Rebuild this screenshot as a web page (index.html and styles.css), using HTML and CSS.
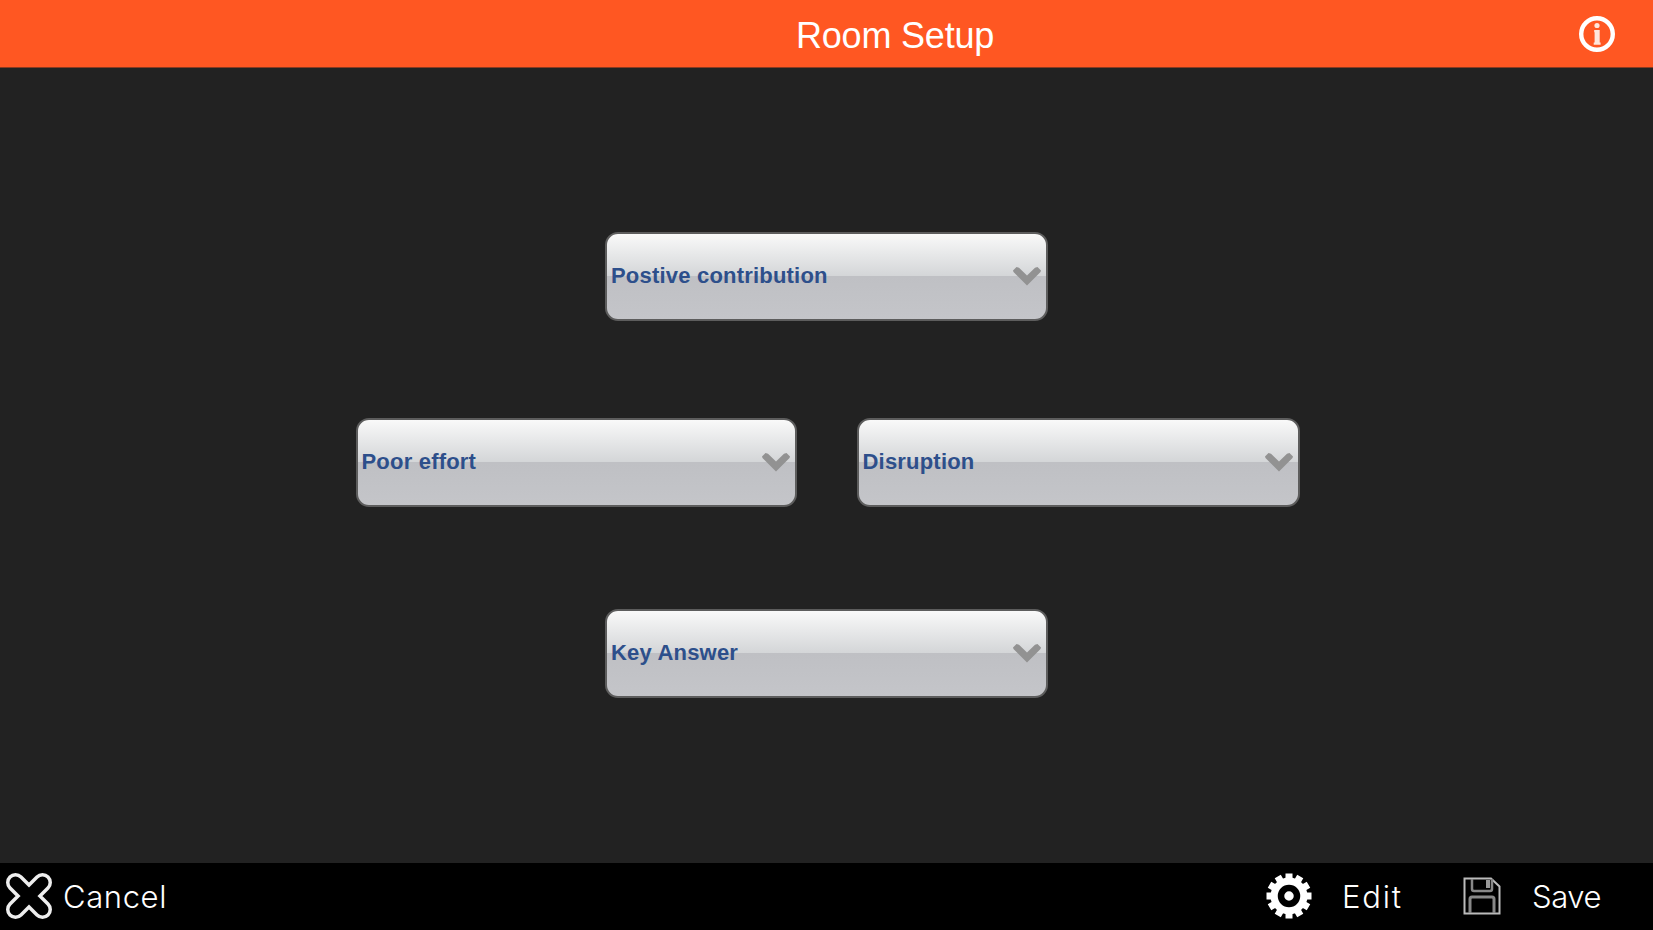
FILE: index.html
```html
<!DOCTYPE html>
<html lang="en">
<head>
<meta charset="utf-8">
<title>Room Setup</title>
<link rel="stylesheet" href="styles.css">
</head>
<body>
<header class="topbar">
  <h1 class="title">Room Setup</h1>
  <button class="info" aria-label="Information">
    <svg width="38" height="38" viewBox="0 0 38 38"><circle cx="19" cy="19" r="15.8" fill="none" stroke="#fff" stroke-width="4.4"/><circle cx="19" cy="10.5" r="2.6" fill="#ffe6dc"/><path d="M16.2 15h5.5v12.5h.9v2.3h-6.9v-2.3h.9V17.2h-.4z" fill="#ffe6dc"/></svg>
  </button>
</header>
<main class="choices">
  <div class="row"><button class="select"><span>Postive contribution</span><svg class="chevron" viewBox="0 0 30 20"><path d="M1 4.5 4.5 1 7 1.8 15 9.6 23 1.8 25.5 1 29 4.500 28.500 6 15 19.500 1.500 6z"/></svg></button></div>
  <div class="row middle"><button class="select left"><span>Poor effort</span><svg class="chevron" viewBox="0 0 30 20"><path d="M1 4.5 4.5 1 7 1.8 15 9.6 23 1.8 25.5 1 29 4.500 28.500 6 15 19.500 1.500 6z"/></svg></button><button class="select"><span>Disruption</span><svg class="chevron" viewBox="0 0 30 20"><path d="M1 4.5 4.5 1 7 1.8 15 9.6 23 1.8 25.5 1 29 4.500 28.500 6 15 19.500 1.500 6z"/></svg></button></div>
  <div class="row"><button class="select"><span>Key Answer</span><svg class="chevron" viewBox="0 0 30 20"><path d="M1 4.5 4.5 1 7 1.8 15 9.6 23 1.8 25.5 1 29 4.500 28.500 6 15 19.500 1.500 6z"/></svg></button></div>
</main>
<footer class="toolbar">
  <button class="action cancel">
    <svg width="48" height="48" viewBox="0 0 48 48"><path d="M10.5 10.5 37.5 37.5M37.5 10.5 10.5 37.5" stroke="#eee" stroke-width="19" stroke-linecap="round"/><path d="M10.5 10.5 37.5 37.5M37.5 10.5 10.5 37.5" stroke="#000" stroke-width="12" stroke-linecap="round"/></svg>
    <span>Cancel</span>
  </button>
  <button class="action edit">
    <svg width="46" height="46" viewBox="-23 -23 46 46"><g fill="#fff"><circle r="18.5"/><path id="tooth" d="M-3.5-17-3.5-22.5H3.5V-17zM-3.5 17V22.5H3.5V17z"/><use href="#tooth" transform="rotate(30)"/><use href="#tooth" transform="rotate(60)"/><use href="#tooth" transform="rotate(90)"/><use href="#tooth" transform="rotate(120)"/><use href="#tooth" transform="rotate(150)"/></g><circle r="8" fill="#fff" stroke="#000" stroke-width="6.5"/></svg>
    <span>Edit</span>
  </button>
  <button class="action save">
    <svg width="38" height="38" viewBox="0 0 38 38" fill="none" stroke="#bbb" stroke-width="2"><path d="M1.5 1.5H28L36.5 9.5V36.5H1.5z"/><path d="M9 2V12Q9 14 11 14H27Q29 14 29 12V2" stroke="#888" stroke-width="2.5"/><path d="M25 3V11" stroke="#999" stroke-width="4"/><path d="M7 36V22Q7 20 9 20H29Q31 20 31 22V36" stroke="#888" stroke-width="3"/></svg>
    <span>Save</span>
  </button>
</footer>
</body>
</html>
```
FILE: styles.css
```css
* { box-sizing: border-box; }
body {
  margin: 0;
  height: 930px;
  display: flex;
  flex-direction: column;
  overflow: hidden;
  background: #222;
  font-family: "Liberation Sans", Arial, sans-serif;
}
button {
  margin: 0;
  padding: 0;
  border: 0;
  background: none;
  color: inherit;
  font: inherit;
}
svg { display: block; flex: none; }
.topbar {
  height: 68px;
  flex: none;
  display: flex;
  align-items: center;
  justify-content: space-between;
  padding: 0 37px 0 796px;
  background: #ff5722;
  border-bottom: 1px solid #8a3a20;
  color: #fff;
}
.title { margin: 4px 0 0; font-size: 36px; font-weight: 400; line-height: 42px; letter-spacing: -0.2px; white-space: nowrap; }
.choices { flex: 1; padding-top: 164px; }
.row { display: flex; justify-content: center; }
.row.middle { gap: 60px; margin: 97px 0 102px; padding-left: 2px; }
.select {
  width: 443px;
  height: 89px;
  display: flex;
  align-items: center;
  justify-content: space-between;
  padding: 0 4px 2px 4px;
  border: 2px solid #5d5d5d;
  border-radius: 13px;
  background: linear-gradient(#f9f9f9 0%, #d4d6d8 49%, #bfc0c4 50%, #c4c5c9 100%);
  color: #2d4f8b;
  font-size: 22px;
  font-weight: 700;
  letter-spacing: 0.2px;
}
.select.left { width: 441px; }
.chevron { width: 30px; height: 20px; fill: #929292; }
.toolbar {
  height: 67px;
  flex: none;
  display: flex;
  align-items: center;
  padding: 0 50px 1px 5px;
  background: #000;
  color: #fff;
  font-family: Inter, Lato, sans-serif;
  font-size: 31px;
  font-weight: 350;
}
.action { display: flex; align-items: center; white-space: nowrap; text-align: left; }
.cancel { gap: 10px; letter-spacing: 0.6px; }
.edit { margin-left: auto; gap: 30px; letter-spacing: 1.8px; }
.edit span { width: 63px; }
.save { margin-left: 58px; gap: 31px; }
.save span { width: 71px; letter-spacing: -0.4px; }
```
